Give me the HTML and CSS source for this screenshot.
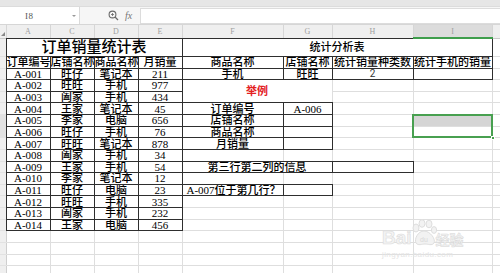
FILE: index.html
```html
<!DOCTYPE html>
<html lang="zh-CN">
<head>
<meta charset="utf-8">
<title>订单销量统计表</title>
<link rel="stylesheet" href="styles.css">
</head>
<body>
<div class="app">
  <div class="topstrip"></div>
  <div class="fbar">
    <div class="namebox"><span class="cellref">I8</span><span class="caret"></span></div>
    <div class="fbtns">
      <svg class="zoomico" width="11" height="11" viewBox="0 0 11 11"><circle cx="4.5" cy="4.5" r="3.4" fill="none" stroke="#6a6a6a" stroke-width="1.1"/><path d="M7 7 L10 10" stroke="#6a6a6a" stroke-width="1.3"/><path d="M3 4.5 H6 M4.5 3 V6" stroke="#6a6a6a" stroke-width="0.8"/></svg>
      <span class="fx">fx</span>
    </div>
    <div class="finput"></div>
  </div>
  <div class="sheet">
    <table class="grid">
      <colgroup>
        <col class="c-rh"><col class="c-44"><col class="c-44"><col class="c-44"><col class="c-44"><col class="c-f"><col class="c-g"><col class="c-h"><col class="c-i"><col class="c-j">
      </colgroup>
      <thead>
        <tr class="colhdr">
          <th class="corner"><span class="tri"></span></th><th>A</th><th>C</th><th>D</th><th>E</th><th>F</th><th>G</th><th>H</th><th class="selcol">I</th><th></th>
        </tr>
      </thead>
      <tbody>
        <tr class="r-title">
          <th class="rh"></th><td class="b title" colspan="4">订单销量统计表</td><td class="b" colspan="4">统计分析表</td><td></td>
        </tr>
        <tr class="r-head">
          <th class="rh"></th><td class="b">订单编号</td><td class="b">店铺名称</td><td class="b">商品名称</td><td class="b">月销量</td><td class="b">商品名称</td><td class="b">店铺名称</td><td class="b">统计销量种类数</td><td class="b">统计手机的销量</td><td></td>
        </tr>
        <tr>
          <th class="rh"></th><td class="b">A-001</td><td class="b">旺仔</td><td class="b">笔记本</td><td class="b">211</td><td class="b">手机</td><td class="b">旺旺</td><td class="b plain">2</td><td class="b"></td><td></td>
        </tr>
        <tr>
          <th class="rh"></th><td class="b">A-002</td><td class="b">旺旺</td><td class="b">手机</td><td class="b">977</td><td class="red" colspan="2" rowspan="2">举例</td><td></td><td></td><td></td>
        </tr>
        <tr>
          <th class="rh"></th><td class="b">A-003</td><td class="b">阖家</td><td class="b">手机</td><td class="b">434</td><td></td><td></td><td></td>
        </tr>
        <tr>
          <th class="rh"></th><td class="b">A-004</td><td class="b">王家</td><td class="b">笔记本</td><td class="b">45</td><td class="b">订单编号</td><td class="b">A-006</td><td></td><td></td><td></td>
        </tr>
        <tr>
          <th class="rh selrow"></th><td class="b">A-005</td><td class="b">李家</td><td class="b">电脑</td><td class="b">656</td><td class="b">店铺名称</td><td class="b"></td><td></td><td class="selfill"></td><td></td>
        </tr>
        <tr>
          <th class="rh selrow"></th><td class="b">A-006</td><td class="b">旺仔</td><td class="b">手机</td><td class="b">76</td><td class="b">商品名称</td><td class="b"></td><td></td><td></td><td></td>
        </tr>
        <tr>
          <th class="rh"></th><td class="b">A-007</td><td class="b">旺旺</td><td class="b">笔记本</td><td class="b">878</td><td class="b">月销量</td><td class="b"></td><td></td><td></td><td></td>
        </tr>
        <tr>
          <th class="rh"></th><td class="b">A-008</td><td class="b">阖家</td><td class="b">手机</td><td class="b">34</td><td></td><td></td><td></td><td></td><td></td>
        </tr>
        <tr>
          <th class="rh"></th><td class="b">A-009</td><td class="b">王家</td><td class="b">手机</td><td class="b">54</td><td class="b" colspan="2">第三行第二列的信息</td><td class="b"></td><td></td><td></td>
        </tr>
        <tr>
          <th class="rh"></th><td class="b">A-010</td><td class="b">李家</td><td class="b">笔记本</td><td class="b">12</td><td></td><td></td><td></td><td></td><td></td>
        </tr>
        <tr>
          <th class="rh"></th><td class="b">A-011</td><td class="b">旺仔</td><td class="b">电脑</td><td class="b">23</td><td class="b left">A-007位于第几行？</td><td class="b"></td><td></td><td></td><td></td>
        </tr>
        <tr>
          <th class="rh"></th><td class="b">A-012</td><td class="b">旺旺</td><td class="b">手机</td><td class="b">335</td><td></td><td></td><td></td><td></td><td></td>
        </tr>
        <tr>
          <th class="rh"></th><td class="b">A-013</td><td class="b">阖家</td><td class="b">手机</td><td class="b">232</td><td></td><td></td><td></td><td></td><td></td>
        </tr>
        <tr>
          <th class="rh"></th><td class="b">A-014</td><td class="b">王家</td><td class="b">电脑</td><td class="b">456</td><td></td><td></td><td></td><td></td><td></td>
        </tr>
        <tr><th class="rh"></th><td></td><td></td><td></td><td></td><td></td><td></td><td></td><td></td><td></td></tr>
        <tr><th class="rh"></th><td></td><td></td><td></td><td></td><td></td><td></td><td></td><td></td><td></td></tr>
        <tr><th class="rh"></th><td></td><td></td><td></td><td></td><td></td><td></td><td></td><td></td><td></td></tr>
        <tr><th class="rh"></th><td></td><td></td><td></td><td></td><td></td><td></td><td></td><td></td><td></td></tr>
        <tr><th class="rh"></th><td></td><td></td><td></td><td></td><td></td><td></td><td></td><td></td><td></td></tr>
        <tr><th class="rh"></th><td></td><td></td><td></td><td></td><td></td><td></td><td></td><td></td><td></td></tr>
      </tbody>
    </table>
    <div class="selbox"><span class="handle"></span></div>
    <div class="wm">
      <div class="wm-logo">
        <span class="wm-bai">Bai</span>
        <svg class="wm-paw" width="30" height="28" viewBox="0 0 30 28"><g fill="#f2f2f2" stroke="#dedede" stroke-width="1"><ellipse cx="8" cy="9" rx="3" ry="4"/><ellipse cx="14" cy="4.5" rx="3" ry="3.8"/><ellipse cx="21" cy="5" rx="3" ry="3.8"/><ellipse cx="26" cy="11" rx="2.6" ry="3.4"/><path d="M16 12 C10 12 6 20 8 24 C10 27 14 25 17 25 C20 25 24 27 26 24 C28 20 22 12 16 12 Z"/></g><text x="12" y="23" font-size="7" fill="#d8d8d8" font-family="Liberation Sans, sans-serif">du</text></svg>
        <span class="wm-jy">经验</span>
      </div>
      <div class="wm-url">jingyan.baidu.com</div>
    </div>
  </div>
</div>
</body>
</html>
```
FILE: styles.css
```css
* { box-sizing: border-box; }
html, body { margin: 0; padding: 0; background: #fff; }
.app { width: 500px; height: 274px; overflow: hidden; position: relative; background: #fff; }

.topstrip { height: 7px; background: #e6e6e6; border-bottom: 1px solid #dcdcdc; }

.fbar { height: 18px; display: flex; align-items: stretch; background: #f6f6f6; border-bottom: 1px solid #d6d6d6; }
.namebox { width: 80px; background: #fff; border-right: 1px solid #dadada; display: flex; align-items: center; position: relative; }
.cellref { margin-left: 25px; font: 9px "Liberation Serif", serif; color: #555; letter-spacing: 0.5px; }
.caret { position: absolute; right: 3px; top: 8px; width: 0; height: 0; border-left: 2px solid transparent; border-right: 2px solid transparent; border-top: 2px solid #999; }
.fbtns { width: 60px; display: flex; align-items: center; gap: 6px; padding-left: 28px; }
.zoomico { display: block; }
.fx { font: italic 10px "Liberation Serif", serif; color: #777; }
.finput { flex: 1; background: #fff; border: 1px solid #dcdcdc; border-right: none; margin: 1px 0 0; }

.sheet { position: relative; height: 248px; overflow: hidden; }
.grid { border-collapse: collapse; table-layout: fixed; width: 552px; font-family: "Liberation Serif", "Noto Sans CJK SC", serif; font-size: 11px; font-weight: 500; color: #000; }
.c-rh { width: 6px; }
.c-44 { width: 44px; }
.c-f { width: 101px; }
.c-g { width: 49px; }
.c-h { width: 81px; }
.c-i { width: 79px; }
.c-j { width: 60px; }

.grid td { border: 1px solid #dedede; padding: 0; height: 11.64px; line-height: 10px; text-align: center; vertical-align: middle; white-space: nowrap; overflow: hidden; }
.grid td.b { border: 1px double #2e2e2e; }
.grid td.title { font-size: 15px; line-height: 16px; }
.grid td.left { text-align: left; padding-left: 4px; }
.grid td.red { color: #e3211f; font-weight: bold; }
.grid td.plain { font-family: Roboto, "Noto Sans", sans-serif; font-weight: normal; color: #333; font-size: 10px; }
.grid td.selfill { background: #d5d5d5; }

.r-title td { height: 18px; }
.r-head td { height: 12px; }

.colhdr th { height: 13px; background: #efefef; color: #a0a0a0; font: 8px "Liberation Serif", serif; font-weight: normal; border-right: 1px solid #d6d6d6; border-bottom: 1px solid #c9c9c9; padding: 0; }
.colhdr th.selcol { background: #dcdcdc; border-bottom: 2px solid #3f9e4c; }
.colhdr th.corner { position: relative; }
.tri { position: absolute; left: 1px; bottom: 2px; width: 0; height: 0; border-left: 4px solid transparent; border-bottom: 4px solid #888; }

.rh { background: #efefef; border: none; border-right: 1px solid #cfcfcf; border-bottom: 1px solid #e2e2e2; padding: 0; }
.rh.selrow { border-right: 1px solid #4aa256; background: #e2e2e2; }

.selbox { position: absolute; left: 412px; top: 88.6px; width: 81px; height: 24.3px; border: 2px solid #48a050; pointer-events: none; }
.handle { position: absolute; right: -4px; bottom: -4px; width: 4px; height: 4px; background: #48a050; border: 1px solid #fff; }

.wm { position: absolute; left: 382px; top: 194px; width: 92px; }
.wm-logo { display: flex; align-items: flex-end; height: 28px; }
.wm-bai { font: bold 19px "Liberation Sans", sans-serif; color: #f3f3f3; -webkit-text-stroke: 0.6px #dcdcdc; line-height: 19px; }
.wm-paw { margin-left: -4px; display: block; }
.wm-jy { font: bold 14px "Noto Sans CJK SC", sans-serif; color: #f3f3f3; -webkit-text-stroke: 0.5px #d8d8d8; line-height: 16px; margin-left: -2px; }
.wm-url { font: 8px "Liberation Sans", sans-serif; color: #e4e4e4; margin-top: 3px; letter-spacing: 0.4px; }
```
